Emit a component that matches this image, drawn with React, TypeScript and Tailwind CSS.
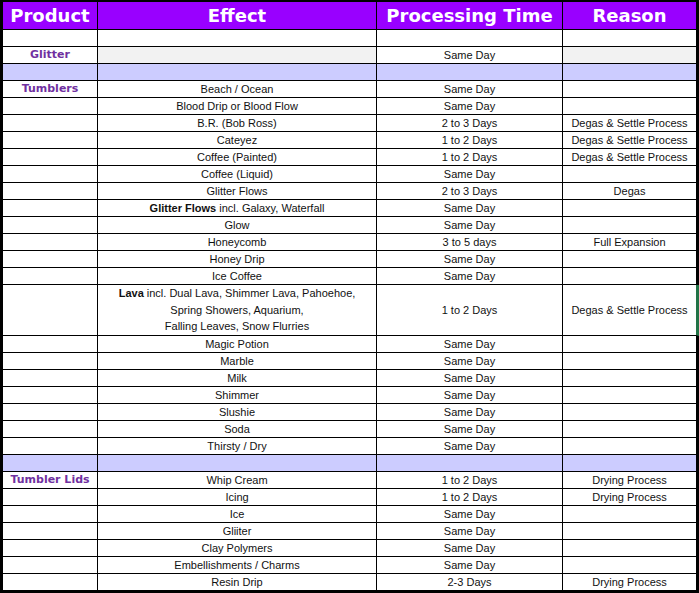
import React from 'react';

type Row = {
  product?: string;
  effect?: React.ReactNode;
  time?: string;
  reason?: string;
  kind?: 'plain' | 'band' | 'glitter' | 'tall';
};

const rows: Row[] = [
  { kind: 'plain' },
  { product: 'Glitter', time: 'Same Day', kind: 'glitter' },
  { kind: 'band' },
  { product: 'Tumblers', effect: 'Beach / Ocean', time: 'Same Day' },
  { effect: 'Blood Drip or Blood Flow', time: 'Same Day' },
  { effect: 'B.R. (Bob Ross)', time: '2 to 3 Days', reason: 'Degas & Settle Process' },
  { effect: 'Cateyez', time: '1 to 2 Days', reason: 'Degas & Settle Process' },
  { effect: 'Coffee (Painted)', time: '1 to 2 Days', reason: 'Degas & Settle Process' },
  { effect: 'Coffee (Liquid)', time: 'Same Day' },
  { effect: 'Glitter Flows', time: '2 to 3 Days', reason: 'Degas' },
  {
    effect: (
      <>
        <b>Glitter Flows</b> incl. Galaxy, Waterfall
      </>
    ),
    time: 'Same Day',
  },
  { effect: 'Glow', time: 'Same Day' },
  { effect: 'Honeycomb', time: '3 to 5 days', reason: 'Full Expansion' },
  { effect: 'Honey Drip', time: 'Same Day' },
  { effect: 'Ice Coffee', time: 'Same Day' },
  {
    effect: (
      <span>
        <b>Lava</b> incl. Dual Lava, Shimmer Lava, Pahoehoe,
        <br />
        Spring Showers, Aquarium,
        <br />
        Falling Leaves, Snow Flurries
      </span>
    ),
    time: '1 to 2 Days',
    reason: 'Degas & Settle Process',
    kind: 'tall',
  },
  { effect: 'Magic Potion', time: 'Same Day' },
  { effect: 'Marble', time: 'Same Day' },
  { effect: 'Milk', time: 'Same Day' },
  { effect: 'Shimmer', time: 'Same Day' },
  { effect: 'Slushie', time: 'Same Day' },
  { effect: 'Soda', time: 'Same Day' },
  { effect: 'Thirsty / Dry', time: 'Same Day' },
  { kind: 'band' },
  { product: 'Tumbler Lids', effect: 'Whip Cream', time: '1 to 2 Days', reason: 'Drying Process' },
  { effect: 'Icing', time: '1 to 2 Days', reason: 'Drying Process' },
  { effect: 'Ice', time: 'Same Day' },
  { effect: 'Gliiter', time: 'Same Day' },
  { effect: 'Clay Polymers', time: 'Same Day' },
  { effect: 'Embellishments / Charms', time: 'Same Day' },
  { effect: 'Resin Drip', time: '2-3 Days', reason: 'Drying Process' },
];

const headFont = { fontFamily: '"DejaVu Sans", sans-serif' };

export default function App() {
  return (
    <div className="w-[699px] h-[593px] bg-white" style={{ fontFamily: '"Liberation Sans", Arial, sans-serif' }}>
      <div className="w-[699px] border-l-[3px] border-t-2 border-b-[3px] border-black">
        <div
          className="grid grid-cols-[95px_279px_186px_133px] h-[28px] border-b border-r-[3px] border-black bg-[#9900ff] text-white font-bold text-[18px] leading-[27px] text-center"
          style={headFont}
        >
          <div className="border-r border-black">Product</div>
          <div className="border-r border-black">Effect</div>
          <div className="border-r border-black">Processing Time</div>
          <div>Reason</div>
        </div>
        {rows.map((r, i) => {
          const last = i === rows.length - 1;
          const band = r.kind === 'band';
          const gray = r.kind === 'glitter';
          const tall = r.kind === 'tall';
          const bg = band ? 'bg-[#ccccff]' : 'bg-white';
          return (
            <div
              key={i}
              className={`grid grid-cols-[95px_279px_186px_133px] overflow-hidden text-[11px] text-[#111] text-center border-r-[3px] ${
                tall ? 'h-[51px] border-r-[#217346]' : last ? 'h-[16px] border-r-black' : 'h-[17px] border-r-black'
              } ${last ? '' : 'border-b border-b-black'}`}
            >
              <div
                className={`border-r border-black ${bg} text-[#7030a0] font-bold text-[11px] leading-[16px]`}
                style={headFont}
              >
                {r.product}
              </div>
              <div
                className={`border-r border-black ${gray ? 'bg-[#f2f2f2]' : bg} ${
                  tall ? 'flex items-center justify-center leading-[16.6px]' : 'leading-[16px]'
                } whitespace-nowrap`}
              >
                {r.effect}
              </div>
              <div className={`border-r border-black ${bg} flex items-center justify-center leading-[16px]`}>
                {r.time}
              </div>
              <div className={`${gray ? 'bg-[#f2f2f2]' : bg} flex items-center justify-center leading-[16px]`}>
                {r.reason}
              </div>
            </div>
          );
        })}
      </div>
    </div>
  );
}
